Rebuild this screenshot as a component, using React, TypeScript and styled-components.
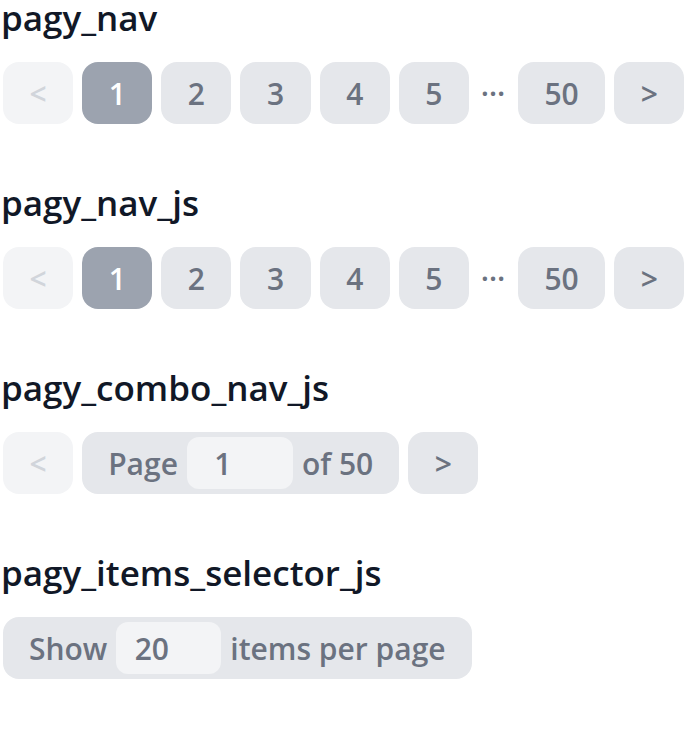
import React from "react";
import styled, { createGlobalStyle } from "styled-components";

const GlobalStyle = createGlobalStyle`
  html, body {
    margin: 0;
    padding: 0;
    background: #ffffff;
  }
  body {
    font-family: "Open Sans", "Noto Sans", sans-serif;
  }
`;

const Page = styled.div`
  display: flex;
  flex-direction: column;
  padding: 0 0 0 3px;
`;

const Section = styled.section`
  display: flex;
  flex-direction: column;
  margin-bottom: 61px;
`;

const Title = styled.h2`
  margin: 0 0 27px -2px;
  font-size: 35px;
  line-height: 35px;
  font-weight: 600;
  color: #111827;
`;

const Row = styled.nav`
  display: flex;
  align-items: center;
  gap: 9px;
  height: 62px;
`;

type Variant = "default" | "current" | "disabled";

const bg: Record<Variant, string> = {
  default: "#e5e7eb",
  current: "#9ca3af",
  disabled: "#f3f4f6",
};
const fg: Record<Variant, string> = {
  default: "#6b7280",
  current: "#ffffff",
  disabled: "#d1d5db",
};

const PageButton = styled.a<{ $variant: Variant }>`
  display: flex;
  align-items: center;
  justify-content: center;
  box-sizing: border-box;
  height: 62px;
  min-width: 70px;
  padding: 0 26.5px;
  border-radius: 16px;
  font-size: 30px;
  font-weight: 600;
  text-decoration: none;
  background: ${(p) => bg[p.$variant]};
  color: ${(p) => fg[p.$variant]};
  cursor: ${(p) => (p.$variant === "default" ? "pointer" : "default")};
`;

const Gap = styled.span`
  width: 31px;
  text-align: center;
  color: #6b7280;
  font-size: 30px;
  font-weight: 600;
  line-height: 30px;
  letter-spacing: 1px;
  padding-bottom: 17px;
`;

const Pill = styled.div`
  display: flex;
  align-items: center;
  gap: 9px;
  height: 62px;
  box-sizing: border-box;
  padding: 0 26px;
  border-radius: 16px;
  background: #e5e7eb;
  color: #6b7280;
  font-size: 30px;
  font-weight: 600;
  white-space: nowrap;
`;

const NumberBox = styled.input<{ $width: number }>`
  box-sizing: border-box;
  width: ${(p) => p.$width}px;
  height: 52px;
  border: none;
  border-radius: 12px;
  background: #f3f4f6;
  padding: 0 34px 0 0;
  text-align: center;
  font: inherit;
  color: #6b7280;
  outline: none;
`;

const NavRow: React.FC = () => (
  <Row>
    <PageButton $variant="disabled">&lt;</PageButton>
    <PageButton $variant="current">1</PageButton>
    {[2, 3, 4, 5].map((n) => (
      <PageButton key={n} $variant="default">
        {n}
      </PageButton>
    ))}
    <Gap>…</Gap>
    <PageButton $variant="default">50</PageButton>
    <PageButton $variant="default">&gt;</PageButton>
  </Row>
);

export default function App() {
  return (
    <>
      <GlobalStyle />
      <Page>
        <Section>
          <Title>pagy_nav</Title>
          <NavRow />
        </Section>
        <Section>
          <Title>pagy_nav_js</Title>
          <NavRow />
        </Section>
        <Section>
          <Title>pagy_combo_nav_js</Title>
          <Row>
            <PageButton $variant="disabled">&lt;</PageButton>
            <Pill>
              <span>Page</span>
              <NumberBox $width={106} type="text" value="1" readOnly />
              <span>of 50</span>
            </Pill>
            <PageButton $variant="default">&gt;</PageButton>
          </Row>
        </Section>
        <Section>
          <Title>pagy_items_selector_js</Title>
          <Row>
            <Pill>
              <span>Show</span>
              <NumberBox $width={105} type="text" value="20" readOnly />
              <span>items per page</span>
            </Pill>
          </Row>
        </Section>
      </Page>
    </>
  );
}
